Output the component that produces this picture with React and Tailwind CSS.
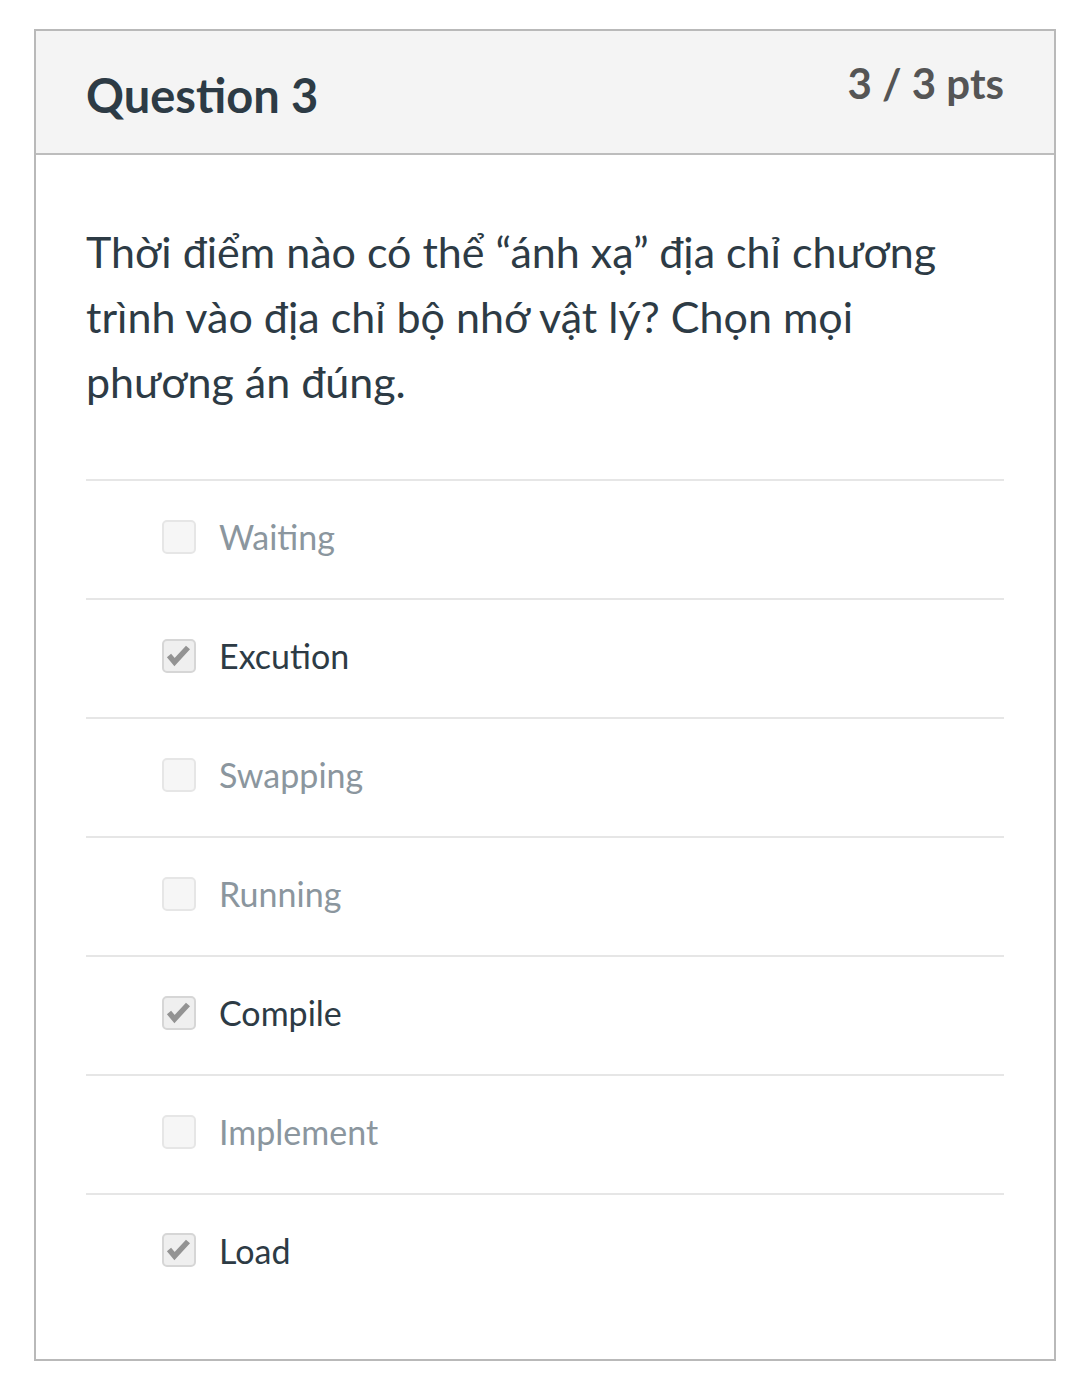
const answers = [
  { label: 'Waiting', checked: false },
  { label: 'Excution', checked: true },
  { label: 'Swapping', checked: false },
  { label: 'Running', checked: false },
  { label: 'Compile', checked: true },
  { label: 'Implement', checked: false },
  { label: 'Load', checked: true },
]

function Checkbox({ checked }) {
  if (!checked) {
    return <span className="block w-[34px] h-[34px] rounded-[5px] border-2 border-[#e6e6e6] bg-[#f6f6f6] shrink-0" />
  }
  return (
    <span className="block w-[34px] h-[34px] rounded-[5px] border-2 border-[#d6d6d6] bg-[#efefef] shrink-0">
      <svg className="block w-[30px] h-[30px]" viewBox="0 0 30 30">
        <polyline points="5,14.5 10.5,21 24,6.5" fill="none" stroke="#939393" strokeWidth="5.5" strokeLinejoin="miter" />
      </svg>
    </span>
  )
}

export default function App() {
  return (
    <div className="min-h-[1386px] bg-white pt-[29px] pl-[34px]" style={{ fontFamily: 'Lato, "Noto Sans", sans-serif' }}>
      <div className="w-[1022px] border-2 border-[#b9b9b9]">
        <div className="h-[124px] bg-[#f4f4f4] border-b-2 border-[#bdbdbd] flex justify-between items-start px-[50px] pt-[27px]">
          <h2 className="mt-[9px] text-[47px] font-bold text-[#2d3b45] leading-[1.2]">Question 3</h2>
          <div className="text-[42px] font-bold text-[#555555] leading-[1.2]">3 / 3 pts</div>
        </div>
        <div className="px-[50px] pt-[64px] pb-[48px]">
          <p className="text-[43px] leading-[65px] text-[#2d3b45] pr-[20px]">
            Thời điểm nào có thể “ánh xạ” địa chỉ chương trình vào địa chỉ bộ nhớ vật lý? Chọn mọi phương án đúng.
          </p>
          <div className="mt-[65px]">
            {answers.map((a, i) => (
              <div
                key={a.label}
                className={`flex items-center gap-[23px] pl-[76px] pb-[6px] border-t-2 border-[#e6e6e6] ${i === answers.length - 1 ? 'h-[118px]' : 'h-[119px]'}`}
              >
                <Checkbox checked={a.checked} />
                <span className={`text-[34px] ${a.checked ? 'text-[#2d3b45]' : 'text-[#8b969e]'}`}>{a.label}</span>
              </div>
            ))}
          </div>
        </div>
      </div>
    </div>
  )
}
